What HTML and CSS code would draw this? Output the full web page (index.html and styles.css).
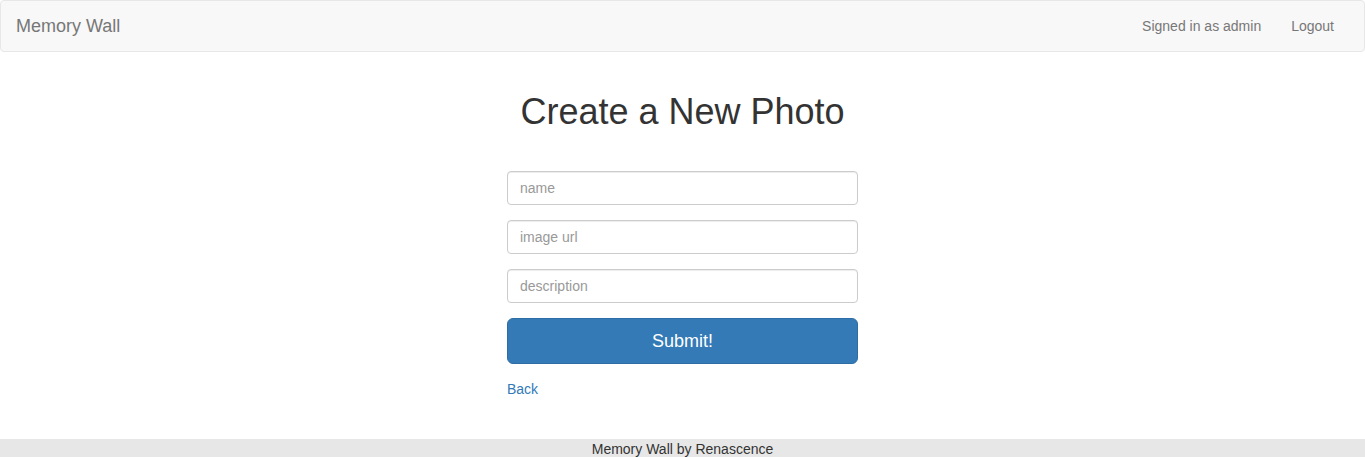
FILE: index.html
```html
<!DOCTYPE html>
<html>
<head>
<meta charset="utf-8">
<title>Memory Wall</title>
<link rel="stylesheet" href="styles.css">
</head>
<body>
<nav class="navbar">
  <a class="brand" href="#">Memory Wall</a>
  <ul class="nav-right">
    <li><a href="#">Signed in as admin</a></li>
    <li><a href="#">Logout</a></li>
  </ul>
</nav>
<main class="main">
  <h1 class="title">Create a New Photo</h1>
  <form class="photo-form">
    <input class="field" type="text" placeholder="name">
    <input class="field" type="text" placeholder="image url">
    <input class="field" type="text" placeholder="description">
    <button class="submit" type="button">Submit!</button>
    <a class="back" href="#">Back</a>
  </form>
</main>
<footer class="footer">Memory Wall by Renascence</footer>
</body>
</html>
```

FILE: styles.css
```css
* { box-sizing: border-box; }
html, body { margin: 0; padding: 0; }
body {
  font-family: "Liberation Sans", Arial, sans-serif;
  font-size: 14px;
  line-height: 20px;
  color: #333;
  background: #fff;
  min-height: 457px;
  display: flex;
  flex-direction: column;
}
.navbar {
  height: 52px;
  background: #f8f8f8;
  border: 1px solid #e7e7e7;
  border-radius: 4px;
  display: flex;
  align-items: stretch;
  justify-content: space-between;
  padding: 0 15px;
}
.brand {
  font-size: 18px;
  line-height: 20px;
  padding: 15px 0;
  color: #777;
  text-decoration: none;
}
.nav-right {
  list-style: none;
  margin: 0;
  padding: 0;
  display: flex;
}
.nav-right a {
  display: block;
  padding: 15px;
  color: #777;
  text-decoration: none;
}
.main {
  flex: 1;
  display: flex;
  flex-direction: column;
  align-items: center;
  padding-top: 20px;
}
.title {
  font-size: 36px;
  font-weight: 500;
  line-height: 1.1;
  margin: 20px 0 39px;
  color: #333;
}
.photo-form {
  width: 351px;
  display: flex;
  flex-direction: column;
}
.field {
  height: 34px;
  padding: 6px 12px;
  font-family: inherit;
  font-size: 14px;
  color: #555;
  border: 1px solid #ccc;
  border-radius: 4px;
  box-shadow: inset 0 1px 1px rgba(0,0,0,.075);
  margin-bottom: 15px;
  outline: none;
}
.field::placeholder { color: #999; }
.submit {
  height: 46px;
  font-family: inherit;
  font-size: 18px;
  line-height: 24px;
  color: #fff;
  background: #337ab7;
  border: 1px solid #2e6da4;
  border-radius: 6px;
  padding: 10px 16px;
  margin-bottom: 15px;
}
.back {
  color: #337ab7;
  text-decoration: none;
  align-self: flex-start;
}
.footer {
  height: 18px;
  line-height: 20px;
  overflow: hidden;
  background: #e7e7e7;
  text-align: center;
  color: #333;
}
```
